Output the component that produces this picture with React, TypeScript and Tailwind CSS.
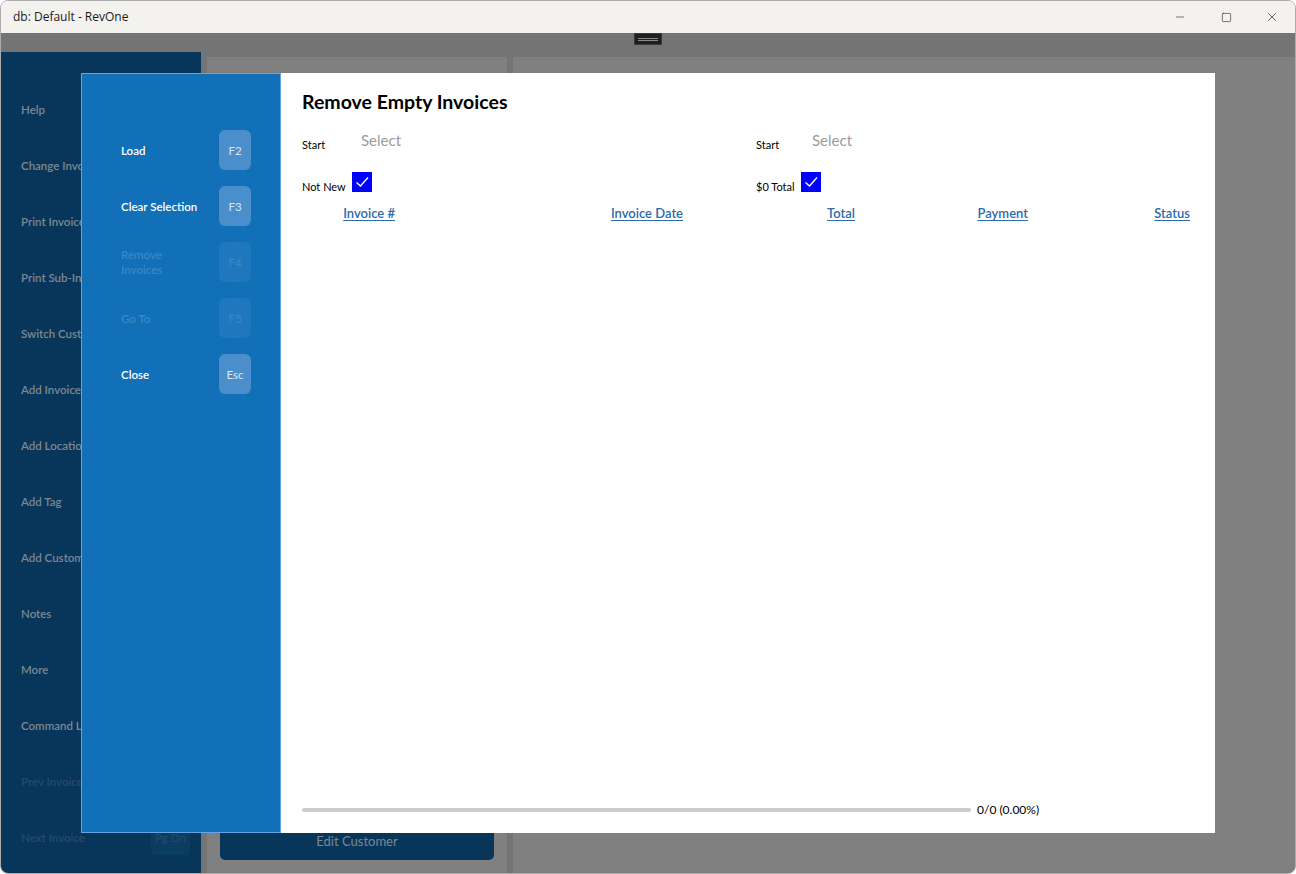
import { Minus, Square, X } from 'lucide-react';

const sideItems = [
  { label: 'Help' },
  { label: 'Change Invoice' },
  { label: 'Print Invoice' },
  { label: 'Print Sub-Invoice' },
  { label: 'Switch Customer' },
  { label: 'Add Invoice' },
  { label: 'Add Location' },
  { label: 'Add Tag' },
  { label: 'Add Customer' },
  { label: 'Notes' },
  { label: 'More' },
  { label: 'Command Line' },
  { label: 'Prev Invoice', dim: true },
  { label: 'Next Invoice', dim: true, key: 'Pg Dn' },
];

const actions = [
  { label: ['Load'], key: 'F2' },
  { label: ['Clear Selection'], key: 'F3' },
  { label: ['Remove', 'Invoices'], key: 'F4', disabled: true },
  { label: ['Go To'], key: 'F5', disabled: true },
  { label: ['Close'], key: 'Esc' },
];

const columns = [
  { label: 'Invoice #', w: 'w-[93px]' },
  { label: 'Invoice Date', w: 'w-[288px]' },
  { label: 'Total', w: 'w-[172px]' },
  { label: 'Payment', w: 'w-[173px]' },
  { label: 'Status', w: 'w-[162px]' },
];

function Check() {
  return (
    <div className="w-[20px] h-[20px] bg-[#0000ff] flex items-center justify-center">
      <svg width="20" height="20" viewBox="0 0 20 20" fill="none">
        <path d="M4.5 10.5 L8.5 14 L16 5.5" stroke="white" strokeWidth="1.3" />
      </svg>
    </div>
  );
}

function Filter({ start, check, offset }: { start: string; check: string; offset: string }) {
  return (
    <div>
      <div className="flex items-start h-[40px]">
        <span className={`${offset} text-[11px] text-black mt-[7px]`}>{start}</span>
        <span className="text-[15px] text-[#9b9b9b] leading-[20px]">Select</span>
      </div>
      <div className="flex items-end gap-[6px] h-[22px]">
        <span className="text-[11px] text-black leading-[14px] mb-[-2px]">{check}</span>
        <Check />
      </div>
    </div>
  );
}

export default function App() {
  return (
    <div className="relative w-[1296px] h-[874px] bg-white overflow-hidden font-['Lato',sans-serif]">
      <div className="w-full h-full flex flex-col rounded-[8px] border border-[#ababab] overflow-hidden">
        {/* title bar */}
        <div className="h-[32px] bg-[#f3f2ef] flex items-center justify-between shrink-0">
          <span className="pl-[12px] text-[12px] text-[#1b1b1b] font-['Open_Sans',sans-serif]">db: Default - RevOne</span>
          <div className="flex items-center h-full">
            <div className="w-[46px] h-full flex items-center justify-center text-[#1b1b1b]">
              <Minus size={12} strokeWidth={1.2} />
            </div>
            <div className="w-[46px] h-full flex items-center justify-center text-[#1b1b1b]">
              <Square size={11} strokeWidth={1.3} />
            </div>
            <div className="w-[46px] h-full flex items-center justify-center text-[#1b1b1b]">
              <X size={14} strokeWidth={1.1} />
            </div>
          </div>
        </div>

        {/* app body, dimmed */}
        <div className="flex-1 flex bg-[#737475]">
          <div className="mt-[19px] w-[200px] bg-[#08365a] rounded-bl-[7px] pt-[38px] flex flex-col gap-[16px] overflow-hidden">
            {sideItems.map((it) => (
              <div key={it.label} className="h-[40px] flex items-center justify-between pl-[20px] pr-[11px] shrink-0">
                <span className={`text-[11.5px] font-semibold whitespace-nowrap ${it.dim ? 'text-[#274a69]' : 'text-[#7b8894]'}`}>
                  {it.label}
                </span>
                {it.key && (
                  <span className="w-[39px] h-[34px] rounded-[5px] bg-[#0b3c62] flex items-center justify-center text-[11.5px] text-[#274a69]">
                    {it.key}
                  </span>
                )}
              </div>
            ))}
          </div>

          <div className="ml-[6px] mt-[24px] w-[300px] bg-[#808080] flex flex-col justify-end px-[13px] pb-[13px]">
            <div className="h-[40px] bg-[#08365a] rounded-[5px] flex items-center justify-center pt-[3px] text-[13px] text-[#7b8894]">
              Edit Customer
            </div>
          </div>
          <div className="ml-[6px] mt-[24px] flex-1 bg-[#808080]" />
        </div>
      </div>

      {/* grip handle */}
      <div className="absolute left-[634px] top-[33px] w-[28px] h-[12px] bg-[#1f1f1f] border border-[#3a3a3a] flex flex-col items-center justify-center gap-[1px]">
        <div className="w-[20px] h-px bg-[#8a8a8a]" />
        <div className="w-[20px] h-px bg-[#8a8a8a]" />
      </div>

      {/* modal */}
      <div className="absolute left-[81px] top-[73px] w-[1134px] h-[760px] flex">
        <div className="w-[200px] bg-[#1170b8] border border-[#62a3e6] pt-[56px] flex flex-col gap-[16px]">
          {actions.map((a) => (
            <div key={a.key} className="h-[40px] flex items-center justify-between pl-[39px] pr-[29px]">
              <span className={`text-[11.5px] font-semibold leading-[15px] ${a.disabled ? 'text-[#3d87c7]' : 'text-white'}`}>
                {a.label.map((l) => (
                  <span key={l} className="block">{l}</span>
                ))}
              </span>
              <span
                className={`w-[32px] h-[40px] rounded-[6px] flex items-center justify-center pt-[1px] text-[11.5px] ${
                  a.disabled ? 'bg-[#1f78bd] text-[#3d87c7]' : 'bg-[#4a8fcb] text-[#dbe8f4]'
                }`}
              >
                {a.key}
              </span>
            </div>
          ))}
        </div>

        <div className="flex-1 bg-white px-[21px] pt-[17px] pb-[14px] flex flex-col">
          <h1 className="text-[19.5px] font-bold text-black leading-[24px] mb-[16px]">Remove Empty Invoices</h1>
          <div className="grid grid-cols-2 gap-x-[16px]">
            <Filter start="Start" check="Not New" offset="w-[59px]" />
            <Filter start="Start" check="$0 Total" offset="w-[56px]" />
          </div>
          <div className="flex mt-[8px]">
            {columns.map((c) => (
              <div key={c.label} className={`${c.w} text-right`}>
                <span className="text-[13px] font-semibold text-[#2d6aa8] underline underline-offset-2">{c.label}</span>
              </div>
            ))}
          </div>
          <div className="flex-1" />
          <div className="flex items-center gap-[6px]">
            <div className="w-[669px] h-[4px] rounded-full bg-[#cccccc]" />
            <span className="text-[12px] text-black">0/0 (0.00%)</span>
          </div>
        </div>
      </div>
    </div>
  );
}
